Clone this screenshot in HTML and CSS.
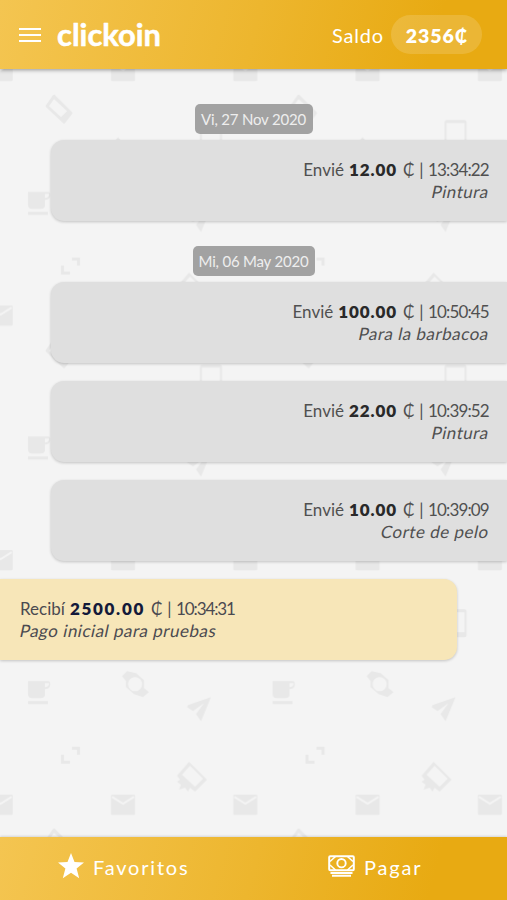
FILE: index.html
```html
<!DOCTYPE html>
<html lang="es">
<head>
<meta charset="utf-8">
<title>clickoin</title>
<link rel="stylesheet" href="styles.css">
</head>
<body>
<svg class="wallpaper" width="507" height="900" aria-hidden="true">
  <defs>
    <pattern id="tile" width="244.6" height="244.6" patternUnits="userSpaceOnUse">
      <g fill="#e8e8e8">
        <path d="M72 13h8v8h-3v-5h-5zM61 21h3v6h6v3h-9z"/>
        <path fill-rule="evenodd" d="M189 28l18 18-12 12-5-4-2 4-3-4-6 2 2-5-4-3 3-2-3-4zm1 4l-8 9 13 12 8-8z"/>
        <path id="mail" d="M112 61h22q1 0 1 1v18q0 1-1 1h-22q-1 0-1-1v-18q0-1 1-1z"/>
        <use href="#mail" x="122.3"/>
        <use href="#mail" x="-122.3"/>
        <path d="M112 63l11 7 11-7M234.300 63l11 7 11-7M-10.300 63l11 7 11-7" fill="none" stroke="#f4f4f4" stroke-width="2"/>
        <path fill-rule="evenodd" d="M55 95l17 17q1 1 0 2l-7 9q-1 1-2 0l-17-16q-1-1 0-2l7-10q1-1 2 0zm-1 4l-5 7 12 11 6-6z"/>
        <path fill-rule="evenodd" d="M202 120h18q2 0 2 2v24q0 2-2 2h-18q-2 0-2-2v-24q0-2 2-2zm0 3v20h18v-20z"/>
        <path d="M118 137l4 5h-8z"/>
        <path fill-rule="evenodd" d="M28 192h20q3 0 2 5-1 3-5 3v5q0 4-4 4h-9q-4 0-4-4zm17 2v4q4 0 4-4zM28 212h20v3h-20z"/>
        <path fill-rule="evenodd" d="M127 182l9 2 8 7v8l5 4-6 5-9-3-8-7v-6l-4-5zm8 6a7 7 0 1 0 .1 0z"/>
        <path d="M211 208l-10 24-5-7 8-11-11 8-6-4 1-2z"/>
      </g>
    </pattern>
  </defs>
  <rect width="507" height="900" fill="url(#tile)"/>
</svg>
<div class="app">
  <header class="topbar">
    <svg class="menu" width="24" height="18" viewBox="0 0 24 18"><path d="M1 3h22M1 9h22M1 15h22" stroke="#fff" stroke-width="2.2"/></svg>
    <svg class="logo" width="116" height="44"><text x="2" y="32" textLength="104" lengthAdjust="spacingAndGlyphs">clickoin</text></svg>
    <span class="balance-label">Saldo</span>
    <span class="balance">2356<i class="coin"></i></span>
  </header>
  <main class="history">
    <div class="date first">Vi, 27 Nov 2020</div>
    <article class="card sent">
      <p class="line"><span>Envié</span><b>12.00</b><span class="cedi">₵</span><span class="bar">|</span><span class="time">13:34:22</span></p>
      <p class="note">Pintura</p>
    </article>
    <div class="date second">Mi, 06 May 2020</div>
    <article class="card sent">
      <p class="line"><span>Envié</span><b>100.00</b><span class="cedi">₵</span><span class="bar">|</span><span class="time">10:50:45</span></p>
      <p class="note">Para la barbacoa</p>
    </article>
    <article class="card sent">
      <p class="line"><span>Envié</span><b>22.00</b><span class="cedi">₵</span><span class="bar">|</span><span class="time">10:39:52</span></p>
      <p class="note">Pintura</p>
    </article>
    <article class="card sent">
      <p class="line"><span>Envié</span><b>10.00</b><span class="cedi">₵</span><span class="bar">|</span><span class="time">10:39:09</span></p>
      <p class="note">Corte de pelo</p>
    </article>
    <article class="card received">
      <p class="line"><span>Recibí</span><b>2500.00</b><span class="cedi">₵</span><span class="bar">|</span><span class="time">10:34:31</span></p>
      <p class="note">Pago inicial para pruebas</p>
    </article>
  </main>
  <nav class="actions">
    <a class="fav"><svg width="26" height="26" viewBox="0 0 26 26"><path fill="#fff" d="M13 0l3.500 9 9.500.5-7.400 6.100 2.600 9.600-8.200-5.400-8.200 5.400 2.600-9.600L0 9.500 9.500 9z"/></svg><span>Favoritos</span></a>
    <a class="pay"><svg width="27" height="22" viewBox="0 0 27 22" fill="none" stroke="#fff"><rect x="1.200" y="1.200" width="24.600" height="14.100" rx="1" stroke-width="2"/><circle cx="13.500" cy="8.200" r="4.200" stroke-width="1.900"/><path d="M2 6.500l5.500-5M25 6.500l-5.500-5M2 10l5.500 5M25 10l-5.500 5" stroke-width="1.600"/><path d="M2.500 18h22M4 20.800h19" stroke-width="1.900"/></svg><span>Pagar</span></a>
  </nav>
</div>
</body>
</html>
```
FILE: styles.css
```css
* { box-sizing: border-box; }
body {
  margin: 0;
  background: #f4f4f4;
  font-family: Lato, "Open Sans", sans-serif;
  color: #505050;
  overflow: hidden;
}
.wallpaper { position: absolute; top: 0; left: 0; }
.app {
  position: relative;
  display: flex;
  flex-direction: column;
  width: 507px;
  height: 900px;
}
.topbar, .actions {
  display: flex;
  align-items: center;
  flex: none;
  color: #fff;
  background: linear-gradient(105deg, #f4c551 0%, #edb62e 50%, #e8aa12 85%, #e8aa12 100%);
}
.topbar {
  height: 69px;
  padding: 0 25px 0 18px;
  box-shadow: 0 1px 4px rgba(0, 0, 0, .4);
}
.menu { flex: none; }
.logo { margin: 2px 0 0 13px; flex: none; }
.logo text {
  font: 700 30px Lato, sans-serif;
  fill: #fff;
  stroke: #fff;
  stroke-width: .5;
  stroke-linejoin: round;
}
.balance-label {
  margin: 1px 7px 0 auto;
  font-size: 20px;
  letter-spacing: .8px;
}
.balance {
  display: flex;
  align-items: center;
  justify-content: center;
  width: 91px;
  height: 39px;
  padding-top: 1px;
  border-radius: 20px;
  background: rgba(255, 255, 255, .15);
  font-size: 19.500px;
  font-weight: 800;
  letter-spacing: 1px;
}
.coin::before { content: "₵"; display: inline-block; font-style: normal; font-size: 18px; letter-spacing: 0; }
.history { flex: 1; display: flex; flex-direction: column; }
.date {
  align-self: center;
  height: 30px;
  border-radius: 5px;
  background: #a2a2a2;
  color: #eee;
  font-size: 15px;
  line-height: 31px;
  letter-spacing: -.2px;
  text-align: center;
}
.first { width: 118px; margin: 35px 0 6px; }
.second { width: 122px; margin: 7px 0 6px; }
.card {
  height: 81px;
  margin-bottom: 18px;
  padding: 19px 18px 0;
  font-size: 17px;
  line-height: 22px;
  box-shadow: 0 1px 3px rgba(0, 0, 0, .2);
}
.sent {
  align-self: flex-end;
  width: 456px;
  border-radius: 13px 0 0 13px;
  background: #dfdfdf;
  text-align: right;
}
.received {
  width: 457px;
  padding-left: 20px;
  border-radius: 0 13px 13px 0;
  background: #f7e6b8;
  color: #4b4a50;
}
.line, .note { margin: 0; }
.line { display: flex; }
.sent .line { justify-content: flex-end; }
.line b { margin-left: 5px; color: #292929; font-weight: 800; letter-spacing: .9px; }
.received b { color: #141a3a; letter-spacing: 1.700px; }
.cedi { width: 12px; margin-left: 6px; text-align: center; }
.bar { width: 13px; text-align: center; }
.time { width: 61px; letter-spacing: -.85px; text-align: left; }
.received .time { letter-spacing: -1.100px; }
.note { letter-spacing: .5px; transform: skewX(-12deg); }
.actions {
  height: 63px;
  box-shadow: 0 -1px 2px rgba(0, 0, 0, .12);
  font-size: 20px;
  letter-spacing: 1.800px;
}
.fav, .pay { display: flex; align-items: center; }
.fav { width: 271px; padding-left: 58px; gap: 9px; margin-top: -5px; }
.pay { padding-left: 57px; gap: 9px; margin-top: -5px; }
.fav span, .pay span { margin-top: 2px; }
```
